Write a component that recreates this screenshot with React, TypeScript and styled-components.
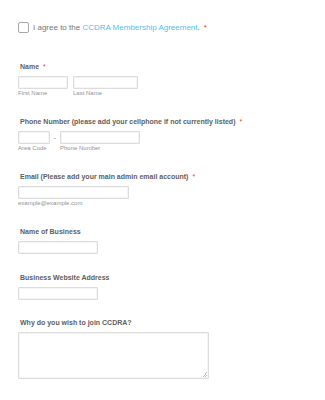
import React from "react";
import styled, { createGlobalStyle } from "styled-components";

const Global = createGlobalStyle`
  html, body { margin: 0; padding: 0; background: #ffffff; }
  body { font-family: "Liberation Sans", Arial, Helvetica, sans-serif; }
  * { box-sizing: border-box; }
`;

const Page = styled.div`
  width: 325px;
  height: 400px;
  padding: 22px 0 0 18px;
  display: flex;
  flex-direction: column;
`;

const AgreeRow = styled.label`
  display: flex;
  align-items: center;
  gap: 4px;
  height: 11px;
  font-size: 8px;
  line-height: 11px;
  color: #777777;
`;

const CheckBox = styled.span`
  width: 11px;
  height: 11px;
  border: 1px solid #a8a8a8;
  border-radius: 2px;
  background: #ffffff;
  flex: none;
`;

const Link = styled.span`
  color: #4cc4f6;
`;

const Star = styled.span`
  color: #f0393b;
  margin-left: 4px;
  font-weight: normal;
`;

const Section = styled.div<{ $top: number }>`
  margin-top: ${(p) => p.$top}px;
  display: flex;
  flex-direction: column;
`;

const Label = styled.div`
  padding-left: 2px;
  height: 9px;
  font-size: 7px;
  line-height: 9px;
  font-weight: bold;
  color: #606060;
  margin-bottom: 5px;
  white-space: nowrap;
`;

const Row = styled.div`
  display: flex;
  align-items: flex-start;
`;

const Field = styled.div<{ $gap?: number }>`
  display: flex;
  flex-direction: column;
  margin-right: ${(p) => p.$gap ?? 0}px;
`;

const TextInput = styled.input<{ $w: number }>`
  appearance: none;
  width: ${(p) => p.$w}px;
  height: 13px;
  border: 1px solid #dcdcdc;
  border-radius: 1px;
  background: #ffffff;
  box-shadow: inset 0 0 0 1px #f5f5f5;
  padding: 0;
  margin: 0;
  outline: none;
`;

const Sub = styled.div`
  font-size: 6px;
  line-height: 8px;
  height: 8px;
  color: #939393;
  white-space: nowrap;
`;

const Dash = styled.div`
  width: 10px;
  height: 13px;
  font-size: 7px;
  line-height: 13px;
  text-align: center;
  color: #888888;
`;

const TextArea = styled.textarea`
  width: 191px;
  height: 47px;
  border: 1px solid #dcdcdc;
  border-radius: 1px;
  box-shadow: inset 0 0 0 1px #f5f5f5;
  padding: 0;
  margin: 0;
  resize: both;
  outline: none;
  display: block;
  &::-webkit-resizer {
    background: linear-gradient(
        135deg,
        transparent 0 50%,
        #b8b8b8 50% 60%,
        transparent 60% 74%,
        #b8b8b8 74% 84%,
        transparent 84%
      )
      right 1px bottom 1px / 5px 5px no-repeat;
  }
`;

export default function App() {
  return (
    <>
      <Global />
      <Page>
        <AgreeRow>
          <CheckBox />
          <span>
            I agree to the <Link>CCDRA Membership Agreement</Link>.
            <Star>*</Star>
          </span>
        </AgreeRow>

        <Section $top={29}>
          <Label>
            Name<Star>*</Star>
          </Label>
          <Row>
            <Field $gap={5}>
              <TextInput $w={50} />
              <Sub>First Name</Sub>
            </Field>
            <Field>
              <TextInput $w={65} />
              <Sub>Last Name</Sub>
            </Field>
          </Row>
        </Section>

        <Section $top={20}>
          <Label>
            Phone Number (please add your cellphone if not currently listed)
            <Star>*</Star>
          </Label>
          <Row>
            <Field>
              <TextInput $w={32} />
              <Sub>Area Code</Sub>
            </Field>
            <Dash>-</Dash>
            <Field>
              <TextInput $w={80} />
              <Sub>Phone Number</Sub>
            </Field>
          </Row>
        </Section>

        <Section $top={20}>
          <Label>
            Email (Please add your main admin email account)<Star>*</Star>
          </Label>
          <Field>
            <TextInput $w={111} />
            <Sub>example@example.com</Sub>
          </Field>
        </Section>

        <Section $top={20}>
          <Label>Name of Business</Label>
          <TextInput $w={80} />
        </Section>

        <Section $top={19}>
          <Label>Business Website Address</Label>
          <TextInput $w={80} />
        </Section>

        <Section $top={18}>
          <Label>Why do you wish to join CCDRA?</Label>
          <TextArea />
        </Section>
      </Page>
    </>
  );
}
